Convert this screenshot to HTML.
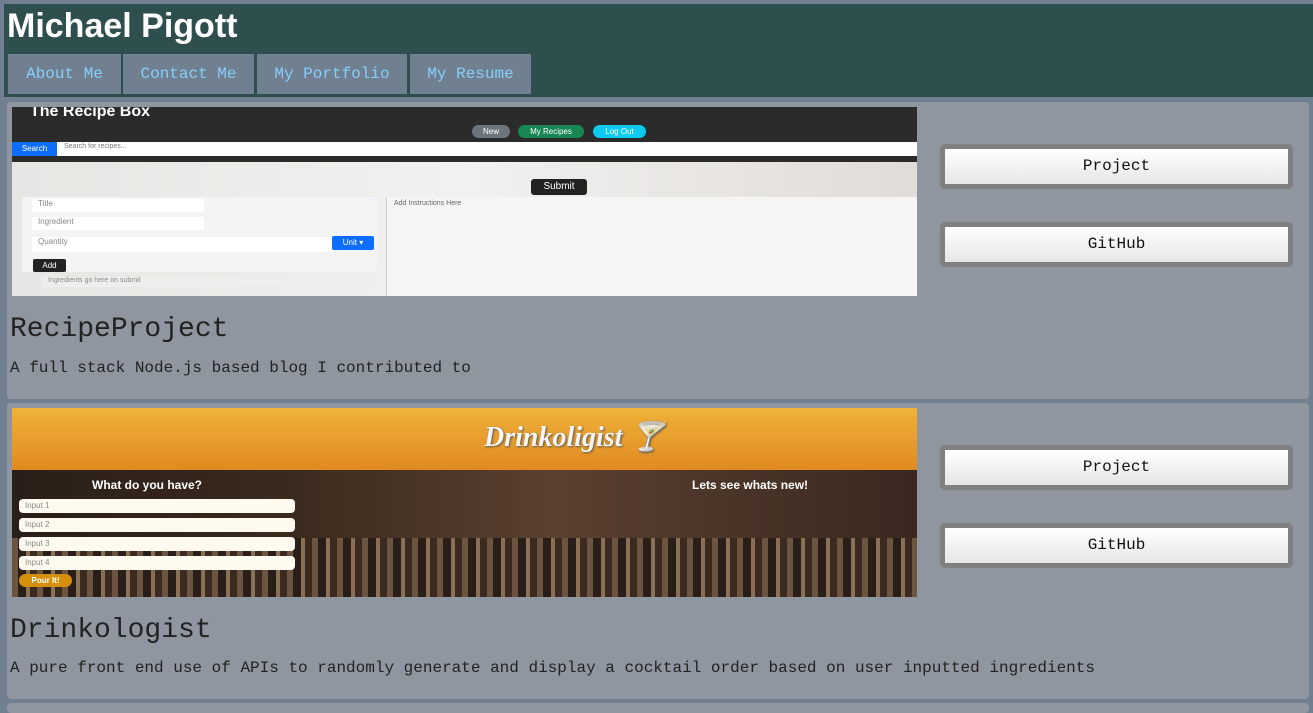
<!DOCTYPE html>
<html><head><style>
body{margin:0;background:#708090;width:1313px;height:707px;overflow:hidden;font-family:"Liberation Mono",monospace;}
.hdr{position:absolute;left:4px;top:4px;width:1309px;height:93px;background:#2f4f4f;}
.hdr h1{position:absolute;left:3px;top:3px;margin:0;font:bold 34px "Liberation Sans",sans-serif;color:#fff;}
.nav a{position:absolute;top:50px;height:40px;line-height:40px;background:#708090;color:#87cefa;font-size:16px;text-align:center;text-decoration:none}
.card{position:absolute;left:7px;width:1302px;background:#8f96a0;border-radius:4px;}
.img{position:absolute;left:5px;top:5px;width:905px;height:189px;overflow:hidden}
.t{position:absolute;left:3px;font-size:28px;color:#222}
.d{position:absolute;left:3px;font-size:16px;color:#222}
.b{position:absolute;left:933px;width:343px;height:35px;border:5px solid #808080;border-radius:5px;background:linear-gradient(#fff,#e6e6e6);text-align:center;line-height:35px;font-size:16px;color:#111}
.pill{position:absolute;height:13px;border-radius:7px;font:8px "Liberation Sans",sans-serif;color:#fff;text-align:center;line-height:13px}
.in{position:absolute;background:#fff;font:8px "Liberation Sans",sans-serif;color:#888;padding-left:6px;box-sizing:border-box}
</style></head><body>
<div class="hdr"><h1>Michael Pigott</h1>
<div class="nav">
<a style="left:4px;width:113px">About Me</a>
<a style="left:119px;width:131px">Contact Me</a>
<a style="left:253px;width:150px">My Portfolio</a>
<a style="left:406px;width:121px">My Resume</a>
</div></div>

<div class="card" style="top:102px;height:297px">
<div class="img" style="background:linear-gradient(90deg,#e8e6e3,#f2f1ef 50%,#e0dcd8)">
<div style="position:absolute;left:0;top:0;width:905px;height:55px;background:#2b2b2b"></div>
<div style="position:absolute;left:18px;top:-4px;font:bold 16px 'Liberation Sans',sans-serif;color:#fff">The Recipe Box</div>
<div class="pill" style="left:460px;top:18px;width:38px;background:#6c757d">New</div>
<div class="pill" style="left:506px;top:18px;width:66px;background:#198754">My Recipes</div>
<div class="pill" style="left:581px;top:18px;width:53px;background:#0dcaf0">Log Out</div>
<div style="position:absolute;left:0;top:35px;width:905px;height:14px;background:#fff"></div>
<div class="pill" style="left:0;top:35px;width:45px;border-radius:0;background:#0d6efd;height:14px">Search</div>
<div style="position:absolute;left:52px;top:36px;font:7px 'Liberation Sans';color:#777">Search for recipes...</div>
<div class="pill" style="left:519px;top:72px;width:56px;height:16px;border-radius:3px;background:#222;font-size:10px;line-height:16px">Submit</div>
<div style="position:absolute;left:10px;top:90px;width:355px;height:75px;background:#f3f4f6;border-radius:3px"></div>
<div class="in" style="left:20px;top:92px;width:172px;height:13px">Title</div>
<div class="in" style="left:20px;top:110px;width:172px;height:13px">Ingredient</div>
<div class="in" style="left:20px;top:130px;width:300px;height:15px">Quantity</div>
<div class="pill" style="left:320px;top:129px;width:42px;height:14px;border-radius:2px;background:#0d6efd">Unit ▾</div>
<div class="pill" style="left:21px;top:152px;width:33px;border-radius:2px;background:#222">Add</div>
<div class="in" style="left:30px;top:170px;width:335px;height:10px;background:#eee;font-size:7px">Ingredients go here on submit</div>
<div style="position:absolute;left:374px;top:90px;width:531px;height:100px;background:#f5f5f5;border-left:1px solid #ccc"></div>
<div style="position:absolute;left:382px;top:93px;font:7px 'Liberation Sans';color:#666">Add Instructions Here</div>
</div>
<div class="t" style="top:212px">RecipeProject</div>
<div class="d" style="top:257px">A full stack Node.js based blog I contributed to</div>
<div class="b" style="top:42px">Project</div>
<div class="b" style="top:120px">GitHub</div>
</div>

<div class="card" style="top:403px;height:296px">
<div class="img" style="background:linear-gradient(90deg,#2a1e18,#3a2a1e 30%,#5a4030 60%,#3a2820)">
<div style="position:absolute;left:0;top:0;width:905px;height:62px;background:linear-gradient(#f0b23a,#e08a20)"></div>
<div style="position:absolute;left:472px;top:12px;font:italic bold 28px 'Liberation Serif',serif;color:#f5f5f5;text-shadow:1px 1px 2px #555">Drinkoligist 🍸</div>
<div style="position:absolute;left:0;top:130px;width:905px;height:59px;background:repeating-linear-gradient(90deg,#6b5540 0 6px,#2a1f18 6px 14px,#8a7055 14px 18px,#3a2a20 18px 25px)"></div>
<div style="position:absolute;left:80px;top:70px;font:bold 12px 'Liberation Sans',sans-serif;color:#fff">What do you have?</div>
<div style="position:absolute;left:680px;top:70px;font:bold 12px 'Liberation Sans',sans-serif;color:#fff">Lets see whats new!</div>
<div class="in" style="left:7px;top:91px;width:276px;height:14px;border-radius:4px;background:#fffaf0;line-height:14px">Input 1</div>
<div class="in" style="left:7px;top:110px;width:276px;height:14px;border-radius:4px;background:#fffaf0;line-height:14px">Input 2</div>
<div class="in" style="left:7px;top:129px;width:276px;height:14px;border-radius:4px;background:#fffaf0;line-height:14px">Input 3</div>
<div class="in" style="left:7px;top:148px;width:276px;height:14px;border-radius:4px;background:#fffaf0;line-height:14px">Input 4</div>
<div class="pill" style="left:7px;top:166px;width:53px;background:#d4900a;font-weight:bold">Pour It!</div>
</div>
<div class="t" style="top:212px">Drinkologist</div>
<div class="d" style="top:256px">A pure front end use of APIs to randomly generate and display a cocktail order based on user inputted ingredients</div>
<div class="b" style="top:42px">Project</div>
<div class="b" style="top:120px">GitHub</div>
</div>
<div class="card" style="top:703px;height:10px"></div>
</body></html>
